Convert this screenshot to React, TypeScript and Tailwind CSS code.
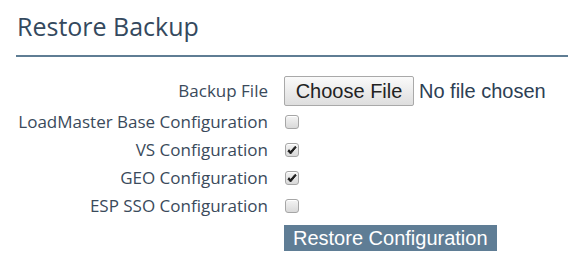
import React from 'react';

const rows = [
  { label: 'LoadMaster Base Configuration', checked: false },
  { label: 'VS Configuration', checked: true },
  { label: 'GEO Configuration', checked: true },
  { label: 'ESP SSO Configuration', checked: false },
];

function Check({ checked }: { checked: boolean }) {
  return (
    <span className="flex h-[14px] w-[14px] items-center justify-center rounded-[3px] border border-[#a6a6a6] bg-gradient-to-b from-[#f4f4f4] to-[#d9d9d9] shadow-[inset_0_1px_0_#fff]">
      {checked && (
        <svg width="10" height="9" viewBox="0 0 10 9">
          <path d="M0.8 5 L3.6 8 L9.2 1.3 L8 0.4 L3.6 5.6 L2.2 3.7 Z" fill="#1e1e1e" stroke="#1e1e1e" strokeWidth="1" strokeLinejoin="round" />
        </svg>
      )}
    </span>
  );
}

export default function App() {
  return (
    <div className="min-h-screen bg-white pt-[9px] font-['Open_Sans',sans-serif] text-[#3a4a5b]">
      {/* header */}
      <h2 className="pl-[17px] text-[25px] leading-[34px] text-[#34495e]">Restore Backup</h2>
      <div className="ml-[16px] mt-[12px] h-[2px] bg-[#5f7d94]" />

      {/* form */}
      <div className="mt-[19px] grid grid-cols-[268px_1fr] gap-x-[16px]">
        <div className="flex h-[30px] items-center justify-end text-[17px]">Backup File</div>
        <div className="flex h-[30px] items-center font-['Liberation_Sans',Arial,sans-serif] text-[20px]">
          <span className="flex h-[30px] w-[130px] items-center justify-center rounded-[2px] border border-[#a9a9a9] bg-gradient-to-b from-[#fafafa] to-[#dedede] text-[#222]">
            Choose File
          </span>
          <span className="ml-[5px] text-[#2d4054]">No file chosen</span>
        </div>

        <div className="col-span-2 h-[2px]" />

        {rows.map((r) => (
          <React.Fragment key={r.label}>
            <div className="flex h-[28px] items-center justify-end text-[17px]">{r.label}</div>
            <div className="flex h-[28px] items-center pl-[1px]">
              <Check checked={r.checked} />
            </div>
          </React.Fragment>
        ))}

        <div />
        <div className="mt-[5px] flex">
          <button className="h-[26px] bg-[#5f7d95] px-[9px] font-['Liberation_Sans',Arial,sans-serif] text-[20px] leading-[26px] text-white">
            Restore Configuration
          </button>
        </div>
      </div>
    </div>
  );
}
